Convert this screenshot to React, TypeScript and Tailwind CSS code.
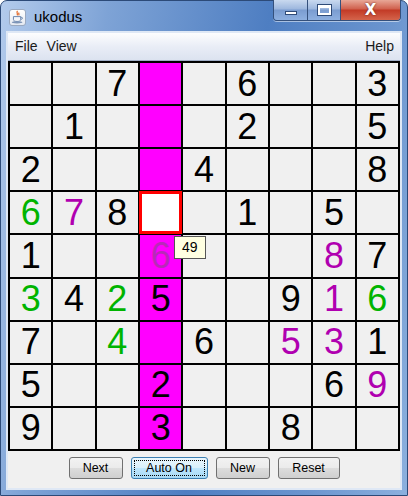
import React from "react";

type Cell = { v: string; c?: "g" | "p" | "h" };

const rows: (Cell | null)[][] = [
  [null, null, { v: "7" }, null, null, { v: "6" }, null, null, { v: "3" }],
  [null, { v: "1" }, null, null, null, { v: "2" }, null, null, { v: "5" }],
  [{ v: "2" }, null, null, null, { v: "4" }, null, null, null, { v: "8" }],
  [{ v: "6", c: "g" }, { v: "7", c: "p" }, { v: "8" }, null, null, { v: "1" }, null, { v: "5" }, null],
  [{ v: "1" }, null, null, { v: "6", c: "h" }, null, null, null, { v: "8", c: "p" }, { v: "7" }],
  [{ v: "3", c: "g" }, { v: "4" }, { v: "2", c: "g" }, { v: "5" }, null, null, { v: "9" }, { v: "1", c: "p" }, { v: "6", c: "g" }],
  [{ v: "7" }, null, { v: "4", c: "g" }, null, { v: "6" }, null, { v: "5", c: "p" }, { v: "3", c: "p" }, { v: "1" }],
  [{ v: "5" }, null, null, { v: "2" }, null, null, null, { v: "6" }, { v: "9", c: "p" }],
  [{ v: "9" }, null, null, { v: "3" }, null, null, { v: "8" }, null, null],
];

const colour = { g: "text-[#00b400]", p: "text-[#b000b0]", h: "text-[#b82ab8]" };

const JavaIcon = () => (
  <div className="w-[17px] h-[17px] rounded-[3px] bg-[linear-gradient(#ffffff,#e4e9f1)] border border-[#9aa9c0] flex items-center justify-center">
    <svg width="13" height="14" viewBox="0 0 16 17">
      <path d="M8 1c-2 2 1 3-0.5 5.5M10 3c-1.5 1.5 0.8 2 -0.6 3.6" stroke="#e2611c" strokeWidth="1.4" fill="none" />
      <path d="M3 8h9v3.5c0 1.6-1.6 2.5-4.5 2.5S3 13.1 3 11.5z" fill="#f4f6fa" stroke="#5b7ba6" strokeWidth="1.1" />
      <path d="M12 9h1.3c1.2 0 1.2 2-0.3 2.2H12" fill="none" stroke="#5b7ba6" strokeWidth="1" />
      <ellipse cx="7.5" cy="15" rx="6.5" ry="1.4" fill="#7d95b8" />
    </svg>
  </div>
);

const TitleButtons = () => (
  <div className="flex h-[21px] -mt-[1px] rounded-b-[4px] overflow-hidden border border-[#34507c] border-t-0 shadow-[0_1px_0_rgba(255,255,255,0.5)]">
    <div className="w-[34px] flex items-center justify-center bg-[linear-gradient(#c9d9ef,#9db7de_45%,#7a9cd0_50%,#8eb0e0)] border-r border-[#34507c]">
      <div className="w-[12px] h-[4px] bg-white border border-[#2f4b78] mt-[6px]" />
    </div>
    <div className="w-[33px] flex items-center justify-center bg-[linear-gradient(#c9d9ef,#9db7de_45%,#7a9cd0_50%,#8eb0e0)] border-r border-[#34507c]">
      <div className="w-[13px] h-[10px] border-[2px] border-white border-t-[3px] outline outline-1 outline-[#2f4b78]" />
    </div>
    <div className="w-[59px] flex items-center justify-center bg-[linear-gradient(#e8a797,#d0604d_45%,#c23a26_50%,#d4644b)] text-white font-['DejaVu_Sans',sans-serif] font-bold text-[15px] leading-none [text-shadow:0_0_2px_#5a1a10]">
      X
    </div>
  </div>
);

const Btn = ({ label, w, focus }: { label: string; w: string; focus?: boolean }) => (
  <button
    className={
      w +
      " h-[22px] rounded-[3px] border text-[12.5px] font-['Liberation_Sans',sans-serif] text-black " +
      (focus
        ? "border-[#3c7fb1] bg-[linear-gradient(#eaf6fd,#d9f0fc_50%,#bee6fd_50%,#a7d9f5)] p-[2px]"
        : "border-[#707070] bg-[linear-gradient(#f2f2f2,#ebebeb_50%,#dddddd_50%,#cfcfcf)]")
    }
  >
    {focus ? (
      <span className="block h-full border border-dotted border-black leading-[14px]">{label}</span>
    ) : (
      label
    )}
  </button>
);

export default function App() {
  return (
    <div className="w-[408px] h-[496px] flex flex-col rounded-t-[7px] border border-[#2c4a78] bg-[linear-gradient(100deg,#b3cbec_0%,#7ea3d6_22%,#4e7ec2_55%,#6b95cf_80%,#8cb0de_100%)]">
      <div className="h-[30px] flex items-start justify-between pr-[6px]">
        <div className="flex items-center gap-[8px] pl-[8px] pt-[5px]">
          <JavaIcon />
          <span className="font-['Liberation_Sans',sans-serif] text-[15px] text-black">ukodus</span>
        </div>
        <TitleButtons />
      </div>
      <div className="mx-[5px] border-2 border-[#dfe8f5] bg-[#f0f0f0] flex flex-col">
        <div className="h-[28px] border-b border-[#a0aec6] bg-[linear-gradient(#fdfdfe,#e9edf6_50%,#dce3f0)] flex items-center px-[5px] font-['Liberation_Sans',sans-serif] text-[14px] text-[#1a1a1a]">
          <span className="px-[2px]">File</span>
          <span className="px-[7px]">View</span>
          <span className="ml-auto pr-[1px]">Help</span>
        </div>
        <div className="relative w-[392px] h-[390px] bg-black p-[2px] grid grid-cols-9 grid-rows-9 gap-[2px]">
          {rows.map((r, ri) =>
            r.map((cell, ci) => {
              const selected = ri === 3 && ci === 3;
              const bg = selected ? "bg-white" : ci === 3 ? "bg-[#ff00ff]" : "bg-[#f0f0f0]";
              return (
                <div
                  key={ri + "-" + ci}
                  className={"relative flex items-center justify-center font-['Liberation_Sans',sans-serif] text-[36px] leading-none " + bg + " " + (cell?.c ? colour[cell.c] : "text-black")}
                >
                  {cell?.v}
                  {selected && <div className="absolute -inset-[1px] border-[3px] border-[#ff0000] z-10" />}
                </div>
              );
            })
          )}
          <div className="absolute left-[166px] top-[175px] z-20 h-[23px] px-[7px] border border-[#555] bg-[#ffffe1] font-['Liberation_Sans',sans-serif] text-[14px] leading-[21px] text-black">
            49
          </div>
        </div>
        <div className="h-[37px] flex items-start justify-center gap-[8px] pt-[6px]">
          <Btn label="Next" w="w-[54px]" />
          <Btn label="Auto On" w="w-[77px]" focus />
          <Btn label="New" w="w-[54px]" />
          <Btn label="Reset" w="w-[62px]" />
        </div>
      </div>
    </div>
  );
}
